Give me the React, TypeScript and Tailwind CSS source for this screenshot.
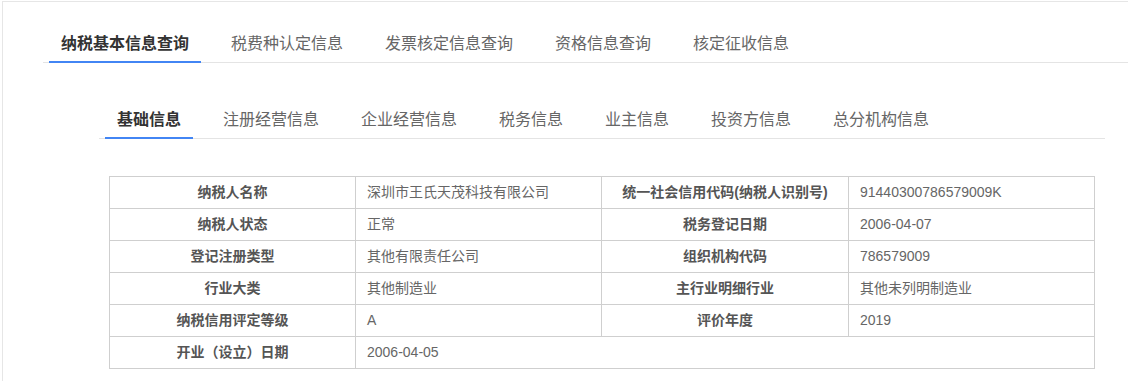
import React from "react";

const topTabs = ["纳税基本信息查询", "税费种认定信息", "发票核定信息查询", "资格信息查询", "核定征收信息"];
const subTabs = ["基础信息", "注册经营信息", "企业经营信息", "税务信息", "业主信息", "投资方信息", "总分机构信息"];

const rows: [string, string, string?, string?][] = [
  ["纳税人名称", "深圳市王氏天茂科技有限公司", "统一社会信用代码(纳税人识别号)", "91440300786579009K"],
  ["纳税人状态", "正常", "税务登记日期", "2006-04-07"],
  ["登记注册类型", "其他有限责任公司", "组织机构代码", "786579009"],
  ["行业大类", "其他制造业", "主行业明细行业", "其他未列明制造业"],
  ["纳税信用评定等级", "A", "评价年度", "2019"],
  ["开业（设立）日期", "2006-04-05"],
];

function Tabs({ items }: { items: string[] }) {
  return (
    <ul className="flex gap-[18px] pl-[6px] border-b border-[#e4e4e4]">
      {items.map((t, i) => (
        <li
          key={t}
          className={
            "relative h-10 px-3 pt-[4px] text-[16px] leading-[36px] whitespace-nowrap " +
            (i === 0 ? "font-bold text-[#333]" : "text-[#666]")
          }
        >
          {t}
          {i === 0 && <span className="absolute left-0 right-0 bottom-[-1px] h-[2px] bg-[#4285f4]" />}
        </li>
      ))}
    </ul>
  );
}

export default function App() {
  return (
    <div
      className="w-[1128px] h-[381px] bg-white overflow-hidden"
      style={{ fontFamily: '"Liberation Sans", "Noto Sans CJK SC", sans-serif' }}
    >
      <div className="ml-[2px] mt-[1px] h-full border-l border-t border-[#e6e6e6]">
        <div className="pt-[20px] pl-[40px]">
          <Tabs items={topTabs} />
        </div>
        <div className="mt-[35px] ml-[96px] w-[1006px]">
          <Tabs items={subTabs} />
          <div className="mt-[37px] mx-[10px]">
            <table className="w-[985px] table-fixed border-collapse text-[14px]">
              <colgroup>
                <col className="w-[246px]" />
                <col className="w-[246px]" />
                <col className="w-[247px]" />
                <col className="w-[246px]" />
              </colgroup>
              <tbody>
                {rows.map((r) => (
                  <tr key={r[0]} className="h-[32px]">
                    <td className="border border-[#cfcfcf] text-center font-bold text-[#555] p-0">{r[0]}</td>
                    {r.length === 2 ? (
                      <td colSpan={3} className="border border-[#cfcfcf] text-[#666] pl-[11px] py-0">
                        {r[1]}
                      </td>
                    ) : (
                      <>
                        <td className="border border-[#cfcfcf] text-[#666] pl-[11px] py-0">{r[1]}</td>
                        <td className="border border-[#cfcfcf] text-center font-bold text-[#555] p-0">{r[2]}</td>
                        <td className="border border-[#cfcfcf] text-[#666] pl-[11px] py-0">{r[3]}</td>
                      </>
                    )}
                  </tr>
                ))}
              </tbody>
            </table>
          </div>
        </div>
      </div>
    </div>
  );
}
